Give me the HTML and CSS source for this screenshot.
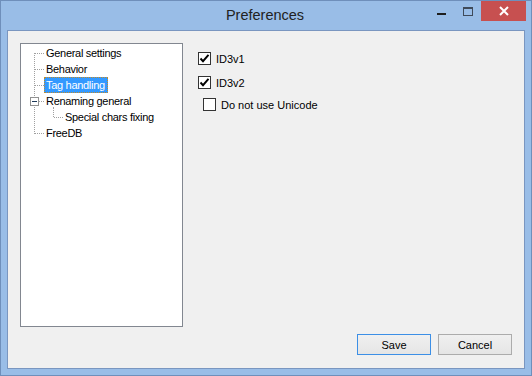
FILE: index.html
```html
<!DOCTYPE html>
<html lang="en">
<head>
    <meta charset="UTF-8">
    <title>Preferences</title>
    <link rel="stylesheet" href="styles.css">
</head>
<body>
    <div class="window">
        <!-- Title bar -->
        <div class="titlebar">
            <span class="title">Preferences</span>
            <div class="caption-buttons">
                <span class="cap-btn min">
                    <svg width="27" height="20"><rect x="9" y="12" width="9" height="2" fill="#1e1e1e"/></svg>
                </span>
                <span class="cap-btn max">
                    <svg width="26" height="20">
                        <rect x="8.5" y="6.5" width="9" height="8" fill="none" stroke="#3f4a5a"/>
                        <rect x="8" y="6" width="10" height="2" fill="#3f4a5a"/>
                    </svg>
                </span>
                <span class="cap-btn close">
                    <svg width="45" height="20"><path d="M19 6 L27 14 M27 6 L19 14" stroke="#fff" stroke-width="2"/></svg>
                </span>
            </div>
        </div>

        <!-- Client area -->
        <div class="client">
            <div class="main">
                <div class="tree">
                    <div class="tree-root">
                        <div class="node"><span class="label">General settings</span></div>
                        <div class="node"><span class="label">Behavior</span></div>
                        <div class="node selected"><span class="label">Tag handling</span></div>
                        <div class="node expanded"><span class="toggle"></span><span class="label">Renaming general</span></div>
                        <div class="node child"><span class="label">Special chars fixing</span></div>
                        <div class="node"><span class="label">FreeDB</span></div>
                    </div>
                </div>

                <div class="options">
                    <label class="check">
                        <span class="box checked">
                            <svg width="11" height="11"><path d="M1.5 5.5 L4 8.2 L9.5 1.8" fill="none" stroke="#000" stroke-width="1.9"/></svg>
                        </span>
                        <span>ID3v1</span>
                    </label>
                    <label class="check">
                        <span class="box checked">
                            <svg width="11" height="11"><path d="M1.5 5.5 L4 8.2 L9.5 1.8" fill="none" stroke="#000" stroke-width="1.9"/></svg>
                        </span>
                        <span>ID3v2</span>
                    </label>
                    <label class="check unicode">
                        <span class="box"></span>
                        <span>Do not use Unicode</span>
                    </label>
                </div>
            </div>

            <div class="footer">
                <button class="btn default">Save</button>
                <button class="btn">Cancel</button>
            </div>
        </div>
    </div>
</body>
</html>
```

FILE: styles.css
```css
/* Global Styles */
* {
    margin: 0;
    padding: 0;
    box-sizing: border-box;
}

body {
    width: 532px;
    height: 376px;
    overflow: hidden;
    font-family: 'Liberation Sans', Arial, sans-serif;
    font-size: 11px;
    color: #000;
}

/* Window frame */
.window {
    width: 532px;
    height: 376px;
    border: 1px solid #6f8fbb;
    background: #99bde7;
    display: flex;
    flex-direction: column;
}

.titlebar {
    height: 29px;
    position: relative;
    text-align: center;
}

.title {
    font-family: 'Liberation Sans', Arial, sans-serif;
    font-size: 14.5px;
    line-height: 29px;
    color: #222;
    position: relative;
    left: -1px;
}

.caption-buttons {
    position: absolute;
    top: 0;
    right: 5px;
    display: flex;
}

.cap-btn {
    display: block;
    height: 20px;
}

.cap-btn svg {
    display: block;
}

.close {
    background: #c75050;
}

/* Client area */
.client {
    margin: 0 6px 6px;
    height: 339px;
    border: 1px solid #7a96c0;
    background: #f0f0f0;
    padding: 12px 12px 13px 12px;
    display: flex;
    flex-direction: column;
}

.main {
    display: flex;
    height: 284px;
}

/* Tree view */
.tree {
    width: 163px;
    height: 284px;
    border: 1px solid #828790;
    background: #fff;
    padding-top: 1px;
    letter-spacing: -0.3px;
}

.tree-root {
    position: relative;
}

.tree-root::before {
    content: "";
    position: absolute;
    left: 13px;
    top: 8px;
    bottom: 7px;
    border-left: 1px dotted #a0a0a0;
}

.node {
    height: 16px;
    line-height: 16px;
    padding-left: 23px;
    position: relative;
    white-space: nowrap;
}

.node::before {
    content: "";
    position: absolute;
    left: 14px;
    top: 8px;
    width: 9px;
    border-top: 1px dotted #a0a0a0;
}

.label {
    display: inline-block;
    height: 16px;
    padding: 0 3px 0 2px;
}

.selected .label {
    background: #3399ff;
    color: #fff;
    outline: 1px dotted #c08a2a;
    outline-offset: -1px;
}

.toggle {
    position: absolute;
    left: 9px;
    top: 4px;
    width: 9px;
    height: 9px;
    border: 1px solid #919191;
    background: #fff;
    z-index: 1;
}

.toggle::after {
    content: "";
    position: absolute;
    left: 1px;
    top: 3px;
    width: 5px;
    height: 1px;
    background: #1e3a5a;
}

.child {
    padding-left: 42px;
}

.child::before {
    left: 33px;
}

.child::after {
    content: "";
    position: absolute;
    left: 32px;
    top: -2px;
    height: 10px;
    border-left: 1px dotted #a0a0a0;
}

/* Options */
.options {
    margin-left: 15px;
    padding-top: 9px;
    display: flex;
    flex-direction: column;
    align-items: flex-start;
}

.check {
    display: flex;
    align-items: center;
    gap: 5px;
    height: 13px;
}

.check + .check {
    margin-top: 11px;
}

.check.unicode {
    margin-top: 9px;
    margin-left: 5px;
}

.box {
    width: 13px;
    height: 13px;
    border: 1px solid #333;
    background: #fff;
}

.box svg {
    display: block;
}

/* Footer buttons */
.footer {
    margin-top: 7px;
    display: flex;
    justify-content: flex-end;
    gap: 7px;
}

.btn {
    width: 74px;
    height: 21px;
    border: 1px solid #acacac;
    background: linear-gradient(#f0f0f0, #e5e5e5);
    font-family: 'Liberation Sans', Arial, sans-serif;
    font-size: 11px;
    color: #000;
}

.btn.default {
    border-color: #3c8fe6;
}
```
